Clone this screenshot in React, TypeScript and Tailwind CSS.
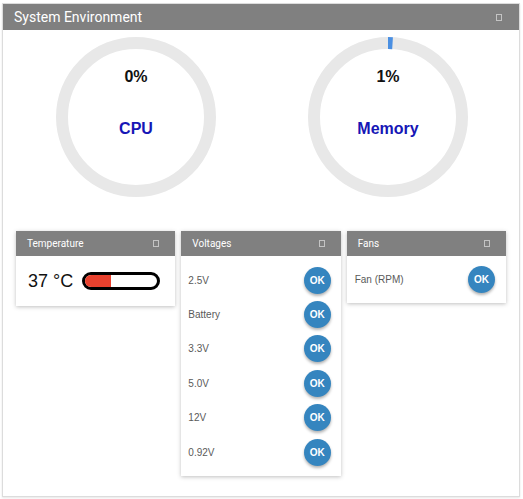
import React from 'react';

const font = { fontFamily: '"Liberation Sans", Arial, sans-serif' };
const headFont = { fontFamily: 'Roboto, "Liberation Sans", Arial, sans-serif' };

function TinyBox() {
  return <div className="h-[7px] w-[6px] border border-[#c4c4c4]" />;
}

function Gauge({ value, label }: { value: number; label: string }) {
  const r = 74;
  const c = 2 * Math.PI * r;
  return (
    <svg width="160" height="160" viewBox="0 0 160 160">
      <circle cx="80" cy="80" r={r} fill="none" stroke="#e8e8e8" strokeWidth="12" />
      {value > 0 && (
        <circle
          cx="80"
          cy="80"
          r={r}
          fill="none"
          stroke="#4a8fe2"
          strokeWidth="12"
          strokeDasharray={`${(c * value) / 100} ${c}`}
          transform="rotate(-90 80 80)"
        />
      )}
      <text x="80" y="45" textAnchor="middle" fontSize="16" fontWeight="bold" fill="#111" style={font}>
        {value}%
      </text>
      <text x="80" y="97" textAnchor="middle" fontSize="16" fontWeight="bold" fill="#1616b6" style={font}>
        {label}
      </text>
    </svg>
  );
}

function OkBadge() {
  return (
    <div className="flex h-[27px] w-[27px] items-center justify-center rounded-full bg-[#3585bf] text-[10px] font-bold text-white shadow-[0_2px_3px_rgba(0,0,0,0.3)]">
      OK
    </div>
  );
}

function Card({ title, children }: { title: string; children: React.ReactNode }) {
  return (
    <div className="self-start bg-white shadow-[0_1px_4px_rgba(0,0,0,0.25)]">
      <div
        className="flex h-[25px] items-center justify-between bg-[#808080] pl-[11px] pr-[16px] text-[10px] text-white"
        style={headFont}
      >
        <span>{title}</span>
        <TinyBox />
      </div>
      {children}
    </div>
  );
}

const voltages = ['2.5V', 'Battery', '3.3V', '5.0V', '12V', '0.92V'];

export default function App() {
  return (
    <div className="min-h-[499px] bg-white pl-[2px] pr-[3px] pt-[3px]" style={font}>
      <div className="border border-[#dcdcdc] bg-white pb-[20px] shadow-[0_1px_2px_rgba(0,0,0,0.1)]">
        <div
          className="flex h-[26px] items-center justify-between bg-[#808080] pl-[11px] pr-[17px] text-[14px] text-white"
          style={headFont}
        >
          <span>System Environment</span>
          <TinyBox />
        </div>
        <div className="grid grid-cols-2 pt-[7px]">
          <div className="flex justify-center pl-[7px]">
            <Gauge value={0} label="CPU" />
          </div>
          <div className="flex justify-center pr-[4px]">
            <Gauge value={1} label="Memory" />
          </div>
        </div>
        <div className="mt-[34px] grid grid-cols-3 gap-[6px] px-[13px]">
          <Card title="Temperature">
            <div className="flex h-[50px] items-center pl-[12px]">
              <span className="text-[18px] text-[#111]">37 °C</span>
              <div className="ml-[9px] h-[18px] w-[78px] overflow-hidden rounded-full border-[3px] border-black bg-white">
                <div className="h-full w-[36%] bg-[#e8412e]" />
              </div>
            </div>
          </Card>
          <Card title="Voltages">
            <div className="flex flex-col py-[7px] pl-[7px] pr-[10px]">
              {voltages.map((v) => (
                <div key={v} className="flex h-[34.4px] items-center justify-between text-[10px] text-[#5a5a5a]">
                  <span>{v}</span>
                  <OkBadge />
                </div>
              ))}
            </div>
          </Card>
          <Card title="Fans">
            <div className="flex h-[47px] items-center justify-between pl-[8px] pr-[11px] text-[10px] text-[#5a5a5a]">
              <span>Fan (RPM)</span>
              <OkBadge />
            </div>
          </Card>
        </div>
      </div>
    </div>
  );
}
